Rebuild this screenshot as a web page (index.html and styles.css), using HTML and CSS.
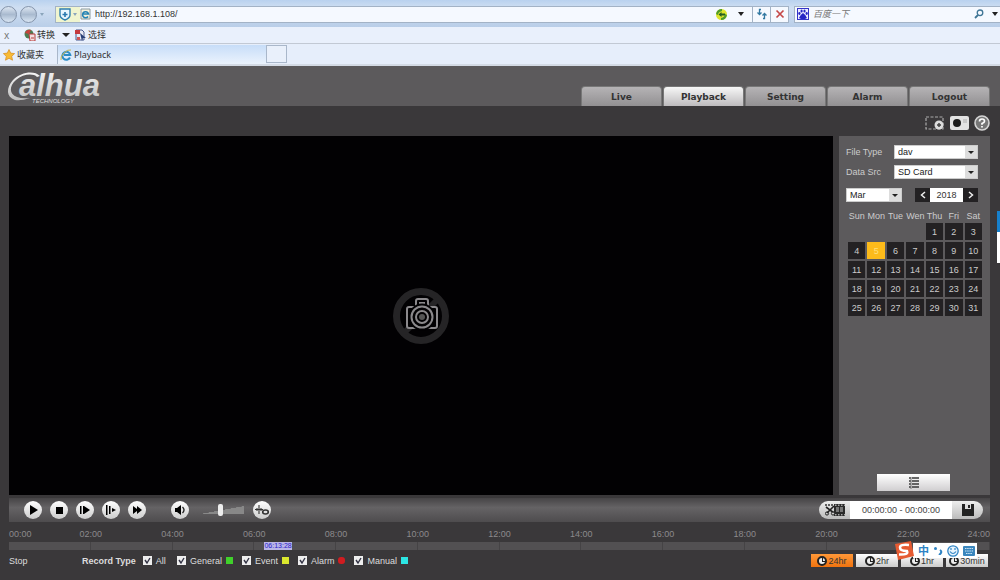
FILE: index.html
```html
<!DOCTYPE html>
<html lang="en">
<head>
<meta charset="utf-8">
<title>Playback</title>
<link rel="stylesheet" href="styles.css">
</head>
<body>
<div class="browser">
  <div class="address-row">
    <div class="nav">
      <button class="orb" aria-label="Back"></button><button class="orb" aria-label="Forward"></button>
      <i class="caret faint"></i>
    </div>
    <div class="address">
      <span class="shield">
        <svg width="12" height="13" viewBox="0 0 12 13"><path d="M1 1h10v6q0 3-5 5Q1 10 1 7z" fill="#e8f6ff" stroke="#2f7fb0" stroke-width="1.4"/><path d="M6 4v5M3.500 6.500h5" stroke="#2878b0" stroke-width="1.600"/></svg>
        <i class="caret faint"></i>
      </span>
      <svg class="page" width="11" height="12" viewBox="0 0 11 12"><path d="M1 1h9v10H1z" fill="#f4f1dc" stroke="#8a9aa0"/><path d="M8 8.500A3 3 0 1 1 8.500 6H3.500" fill="none" stroke="#2382b4" stroke-width="1.600"/></svg>
      <input class="url" type="text" aria-label="Address" value="http://192.168.1.108/">
      <svg width="13" height="13" viewBox="0 0 13 13"><circle cx="6.500" cy="6.500" r="5.500" fill="#dde52c"/><path d="M7 1Q2 1 1 6l2 1q0-3 4-4zM6 12q5 0 6-5l-2-1q0 3-4 4z" fill="#4e9b2e"/><path d="M3.500 6.500L6.500 4v5zM6 5.500h4v2H6z" fill="#245e20"/></svg>
      <i class="caret"></i>
      <button class="cell" aria-label="Refresh"><svg width="12" height="12" viewBox="0 0 12 12"><path d="M5 1.500H3.500V6M1.500 4.500l2 2 2-2M7 10.500h1.500V6M6.500 7.500l2-2 2 2" fill="none" stroke="#3379a2" stroke-width="1.300"/></svg></button>
      <button class="cell" aria-label="Stop"><svg width="10" height="10" viewBox="0 0 10 10"><path d="M1.500 1.500l7 7M8.500 1.500l-7 7" stroke="#c54848" stroke-width="1.700"/></svg></button>
    </div>
    <div class="search">
      <svg width="12" height="12" viewBox="0 0 12 12"><path d="M0 0h12v12H0z" fill="#3333c8"/><path d="M1 1h10v10H1z" fill="#eef"/><g fill="#2626c4"><ellipse cx="4.600" cy="3" rx="1.100" ry="1.600"/><ellipse cx="7.500" cy="3" rx="1.100" ry="1.600"/><ellipse cx="2.400" cy="5.500" rx="1.100" ry="1.400"/><ellipse cx="9.700" cy="5.500" rx="1.100" ry="1.400"/><path d="M6 5q3 2 4 5l-2 1H4l-2-1q1-3 4-5z"/></g></svg>
      <input class="query" type="text" aria-label="Search" placeholder="百度一下">
      <svg width="10" height="10" viewBox="0 0 10 10"><circle cx="6" cy="3.800" r="2.800" fill="none" stroke="#3f7696" stroke-width="1.300"/><path d="M4 6L1 9" stroke="#3f7696" stroke-width="1.800"/></svg>
      <i class="caret"></i>
    </div>
  </div>
  <div class="addon-row">
    <span class="close">x</span>
    <svg width="12" height="12" viewBox="0 0 12 12"><circle cx="5" cy="5" r="4.500" fill="#4b7c52"/><path d="M1 4q2-4 6-3L5 5z" fill="#c8423b"/><path d="M5 5h6v7H6z" fill="#f3dede" stroke="#b63c3c"/><path d="M7 9h3" stroke="#b63c3c"/></svg>
    <span class="addon">转换</span>
    <i class="caret big"></i>
    <svg width="12" height="12" viewBox="0 0 12 12"><path d="M1 1h6l2 2v8H1z" fill="#e7e9f4" stroke="#47598e"/><path d="M0 1h5v4H0z" fill="#c4383d"/><path d="M5 4l6 5-3 0-1 3z" fill="#273f78"/><path d="M2 8h3v3H2z" fill="#cf5555"/></svg>
    <span class="addon">选择</span>
  </div>
  <div class="tab-row">
    <div class="favorites">
      <svg width="12" height="12" viewBox="0 0 12 12"><path d="M6 .5l1.700 3.600 3.900.5-2.900 2.700.8 3.900L6 9.300l-3.500 1.900.8-3.900L.4 4.600l3.900-.5z" fill="#f8bb35" stroke="#d9932a" stroke-width=".8"/></svg>
      <span>收藏夹</span>
    </div>
    <div class="page-tab">
      <svg width="12" height="12" viewBox="0 0 12 12"><path d="M10 8.500A4 4 0 1 1 10.300 6H4" fill="none" stroke="#2d8dc6" stroke-width="2"/><path d="M1 11Q0 8 4 4t7-3" fill="none" stroke="#c9b54a" stroke-width="1"/></svg>
      <span>Playback</span>
    </div>
    <button class="new-tab" aria-label="New tab"></button>
  </div>
</div>

<div class="app">
  <header class="header">
    <svg class="logo" width="100" height="36" viewBox="0 0 100 36" role="img" aria-label="alhua technology">
      <defs><linearGradient id="metal" x1="0" y1="0" x2="0" y2="1"><stop offset="0" stop-color="#f5f5f5"/><stop offset="1" stop-color="#bdbdbd"/></linearGradient></defs>
      <path d="M34 8C28 2 15 4 7 12 0 20 0 29 9 32q6 1 15-2-8 1-13-1C3 26 3 18 10 12 17 6 27 5 31 9z" fill="url(#metal)"/>
      <text x="13" y="28" class="logo-name">alhua</text>
      <text x="26" y="35" class="logo-sub">TECHNOLOGY</text>
    </svg>
    <nav class="tabs">
      <a href="#live">Live</a><a href="#playback" class="active">Playback</a><a href="#setting">Setting</a><a href="#alarm">Alarm</a><a href="#logout">Logout</a>
    </nav>
  </header>

  <main class="content">
    <div class="tools">
      <button aria-label="Select region"><svg width="20" height="16" viewBox="0 0 20 16"><path d="M1 2h17v12H1z" fill="none" stroke="#aaa" stroke-width="1.200" stroke-dasharray="3 1.500"/><circle cx="14" cy="10" r="4.500" fill="#ddd"/><path d="M14 8v4M12 10h4" stroke="#444" stroke-width="1.500"/></svg></button>
      <button aria-label="Record mode"><svg width="19" height="14" viewBox="0 0 19 14"><rect width="19" height="14" rx="2" fill="#e3e3e3"/><circle cx="7" cy="7" r="4" fill="#1c1c1c"/><path d="M13 3h4v4h-4z" fill="#c8c8c8"/></svg></button>
      <button aria-label="Help"><svg width="16" height="16" viewBox="0 0 16 16"><circle cx="8" cy="8" r="7" fill="#777" stroke="#d5d5d5" stroke-width="1.600"/><path d="M5.500 6.500Q5.500 4 8 4t2.500 2.200Q10.500 7.500 8 8.500v1.200M8 11v1.600" fill="none" stroke="#fff" stroke-width="1.700"/></svg></button>
    </div>

    <div class="stage">
      <div class="video">
        <svg class="camera" width="58" height="58" viewBox="0 0 58 58"><circle cx="29" cy="29" r="24.500" fill="none" stroke="#252426" stroke-width="7"/><path d="M12 46L46 12" stroke="#252426" stroke-width="6"/><g fill="#020103" stroke="#8b898c" stroke-width="2"><path d="M24 20v-6q0-2 2-2h8q2 0 2 2v6z"/><path d="M27 16.500h6" stroke-width="3"/><rect x="15" y="20" width="30" height="21" rx="2"/><circle cx="30" cy="30" r="12.500" stroke="#020103"/><circle cx="30" cy="30" r="10.500"/><circle cx="30" cy="30" r="6"/><circle cx="30" cy="30" r="3" fill="#555" stroke="none"/></g></svg>
      </div>
      <aside class="panel">
        <div class="field"><label for="type">File Type</label><select id="type"><option>dav</option></select></div>
        <div class="field"><label for="src">Data Src</label><select id="src"><option>SD Card</option></select></div>
        <div class="period">
          <select aria-label="Month"><option>Mar</option></select>
          <div class="year">
            <button aria-label="Previous year"><svg width="6" height="8" viewBox="0 0 6 8"><path d="M5 1L1.500 4 5 7" fill="none" stroke="#eee" stroke-width="1.500"/></svg></button>
            <input type="text" aria-label="Year" value="2018">
            <button aria-label="Next year"><svg width="6" height="8" viewBox="0 0 6 8"><path d="M1 1l3.500 3L1 7" fill="none" stroke="#eee" stroke-width="1.500"/></svg></button>
          </div>
        </div>
        <table class="calendar">
          <thead><tr><th>Sun</th><th>Mon</th><th>Tue</th><th>Wen</th><th>Thu</th><th>Fri</th><th>Sat</th></tr></thead>
          <tbody>
            <tr><td class="blank"></td><td class="blank"></td><td class="blank"></td><td class="blank"></td><td>1</td><td>2</td><td>3</td></tr>
            <tr><td>4</td><td class="today">5</td><td>6</td><td>7</td><td>8</td><td>9</td><td>10</td></tr>
            <tr><td>11</td><td>12</td><td>13</td><td>14</td><td>15</td><td>16</td><td>17</td></tr>
            <tr><td>18</td><td>19</td><td>20</td><td>21</td><td>22</td><td>23</td><td>24</td></tr>
            <tr><td>25</td><td>26</td><td>27</td><td>28</td><td>29</td><td>30</td><td>31</td></tr>
          </tbody>
        </table>
        <button class="list" aria-label="File list"><svg width="12" height="12" viewBox="0 0 12 12"><path d="M1 1h2M1 4h2M1 7h2M1 10h2M4 1h7M4 4h7M4 7h7M4 10h7" stroke="#3a3a3a" stroke-width="1.400"/><path d="M3 0v12" stroke="#777" stroke-width="1"/></svg></button>
      </aside>
    </div>

    <div class="controls">
      <div class="transport">
        <button class="round" aria-label="Play"><svg width="10" height="10" viewBox="0 0 10 10"><path d="M2 0l8 5-8 5z"/></svg></button>
        <button class="round" aria-label="Stop"><svg width="10" height="10" viewBox="0 0 10 10"><path d="M2 2h7v7H2z"/></svg></button>
        <button class="round" aria-label="Next frame"><svg width="10" height="10" viewBox="0 0 10 10"><path d="M0 1h1.500v8H0zM3 1h1v8H3zM4 1l6 4-6 4z"/></svg></button>
        <button class="round" aria-label="Slow"><svg width="10" height="10" viewBox="0 0 10 10"><path d="M0 0h1.500v10H0zM3 1h1.500v8H3zM6 3l4 2-4 2z"/></svg></button>
        <button class="round" aria-label="Fast"><svg width="10" height="10" viewBox="0 0 10 10"><path d="M1 1l4 3V1l5 4-5 4V6L1 9z"/></svg></button>
      </div>
      <button class="round" aria-label="Mute"><svg width="11" height="10" viewBox="0 0 11 10"><path d="M0 3h2l4-3v10L2 7H0z"/><path d="M7.500 2q3 3 0 6" fill="none" stroke="#222" stroke-width="1.300"/></svg></button>
      <div class="volume"><input type="range" aria-label="Volume" min="0" max="100" value="47"></div>
      <button class="round" aria-label="Rules"><svg width="15" height="12" viewBox="0 0 15 12"><path d="M4 1v9M0 5.500h8M2 4v3M6 4v3" stroke="#333" stroke-width="1.100"/><ellipse cx="10.500" cy="8" rx="2.800" ry="2" fill="none" stroke="#333" stroke-width="1.600"/></svg></button>
      <div class="clip">
        <button aria-label="Cut"><svg width="20" height="12" viewBox="0 0 20 12"><path d="M9 0h11v12H9z" fill="#2a2a2a"/><path d="M11 3h3v5h-3zM15 3h3v5h-3z" fill="#777"/><path d="M10 1.200h10M10 10.800h10" stroke="#ddd" stroke-width="1" stroke-dasharray="1.500 1.500"/><path d="M0 1h10" stroke="#333" stroke-width="1.500" stroke-dasharray="2 1"/><path d="M1 3l8 6M9 2L2 9" stroke="#222" stroke-width="1.600"/><circle cx="2" cy="9.500" r="1.600" fill="none" stroke="#222"/><circle cx="8" cy="9.500" r="1.600" fill="#ccc" stroke="#222"/></svg></button>
        <span class="range">00:00:00 - 00:00:00</span>
        <button aria-label="Save"><svg width="12" height="12" viewBox="0 0 12 12"><path d="M0 0h12v12H0z" fill="#222"/><path d="M3 0h6v5H3z" fill="#ddd"/><path d="M6 1h2v3H6z" fill="#222"/></svg></button>
      </div>
    </div>

    <div class="timeline">
      <div class="hours"><span>00:00</span><span>02:00</span><span>04:00</span><span>06:00</span><span>08:00</span><span>10:00</span><span>12:00</span><span>14:00</span><span>16:00</span><span>18:00</span><span>20:00</span><span>22:00</span><span>24:00</span></div>
      <div class="track"><i></i><i></i><i></i><i></i><i></i><i></i><i></i><i></i><i></i><i></i><i></i><i></i><span class="cursor">06:13:28</span></div>
    </div>

    <footer class="status">
      <span class="state">Stop</span>
      <span class="types">
        <b>Record Type</b>
        <label class="all"><input type="checkbox" checked>All</label>
        <label><input type="checkbox" checked>General<i class="green"></i></label>
        <label><input type="checkbox" checked>Event<i class="yellow"></i></label>
        <label><input type="checkbox" checked>Alarm<i class="red"></i></label>
        <label><input type="checkbox" checked>Manual<i class="cyan"></i></label>
      </span>
      <span class="zoom">
        <button class="on"><i class="clock"></i>24hr</button><button><i class="clock"></i>2hr</button><button><i class="clock"></i>1hr</button><button><i class="clock"></i>30min</button>
      </span>
    </footer>
  </main>
</div>

<div class="side-widget"></div>
<div class="ime">
  <svg width="20" height="19" viewBox="0 0 20 19"><path d="M1 3l16-3 3 15-16 4z" fill="#e65b32"/><path d="M15 4Q6 3 6 6.500t7 3.500q2 4-8 3.500" fill="none" stroke="#fff" stroke-width="2.500"/></svg>
  <span>中</span>
  <svg width="10" height="9" viewBox="0 0 10 9"><circle cx="2.500" cy="2.500" r="1.500" fill="#2e83c4"/><path d="M7 4q3 2-1 5" fill="none" stroke="#2e83c4" stroke-width="2"/></svg>
  <svg width="12" height="12" viewBox="0 0 12 12"><circle cx="6" cy="6" r="5.200" fill="#e8f4fc" stroke="#3285c5" stroke-width="1.300"/><path d="M3 6.500q3 4 6 0M4 3v2M8 3v2" fill="none" stroke="#3285c5" stroke-width="1.200"/></svg>
  <svg width="12" height="10" viewBox="0 0 12 10"><rect width="12" height="10" rx="1" fill="#3a86bd"/><path d="M2 2.500h8M2 5h8M3 7.500h6" stroke="#cce5f5" stroke-width="1" stroke-dasharray="1.500 .7"/></svg>
</div>
</body>
</html>
```
FILE: styles.css
```css
* { box-sizing: border-box; }
body {
  margin: 0;
  min-height: 100vh;
  display: flex;
  flex-direction: column;
  background: #3a383a;
  font: 9px/12px "Liberation Sans", Arial, sans-serif;
  color: #ccc;
}
button, input, select { font: inherit; color: inherit; margin: 0; padding: 0; border: 0; border-radius: 0; background: none; }
svg { display: block; flex: none; }
a { text-decoration: none; }

/* Browser chrome */
.browser { background: #e6eefb; color: #333; font-family: "Noto Sans", "Noto Sans CJK SC", sans-serif; }
.address-row { display: flex; align-items: center; gap: 5px; height: 27px; padding-top: 1px; background: linear-gradient(#b9d2ef, #d0dff2 30%, #b9cee8); }
.nav { display: flex; align-items: center; gap: 3px; width: 50px; }
.orb { width: 17px; height: 17px; border: 1px solid #8494ab; border-radius: 50%; background: linear-gradient(#dce6f2, #a9bacf 50%, #d9e6f4); }
.caret { flex: none; border: 3px solid transparent; border-top: 4px solid #222; border-bottom: 0; }
.caret.faint { border-width: 3px 2px 0; border-top-color: #8ba5bb; }
.caret.big { border-width: 4px 4px 0; }
.address, .search { display: flex; align-items: center; height: 17px; border: 1px solid #a3b3c6; background: #f5f9ff; }
.address { flex: 1; gap: 4px; }
.shield { display: flex; align-items: center; gap: 2px; height: 15px; padding: 0 3px; background: #f0f5cf; }
.page { margin-left: -4px; }
.url { flex: 1; min-width: 0; font-family: "Liberation Sans", Arial, sans-serif; }
.address > .caret { margin: 0 4px 0 6px; }
.cell { display: grid; place-items: center; align-self: stretch; width: 18px; margin-left: -4px; border-left: 1px solid #a3b3c6; }
.address .cell:first-of-type { margin-left: 0; }
.search { width: 206px; gap: 4px; padding: 0 2px; border-right: 0; }
.query { flex: 1; min-width: 0; font-style: italic; }
.query::placeholder { color: #777; opacity: 1; }
.search .caret { margin-left: 4px; }
.addon-row { display: flex; align-items: center; height: 17px; padding-left: 4px; border-bottom: 1px solid #c2c9d4; background: #e9f0fc; }
.close { width: 20px; color: #777; font-size: 10px; }
.addon { margin-left: 1px; }
.addon-row .big { margin: 0 5px 0 7px; }
.tab-row { display: flex; height: 22px; padding-top: 1px; border-bottom: 2px solid #d4dbe5; }
.favorites { display: flex; align-items: center; gap: 2px; width: 58px; padding-left: 3px; border-right: 1px solid #a9b7ca; }
.page-tab { display: flex; align-items: center; gap: 2px; width: 208px; padding-left: 2px; background: linear-gradient(#c7ddf8, #ebf3fd); }
.new-tab { width: 21px; height: 18px; border: 1px solid #a9b7ca; background: #e9f0fb; }

/* Header */
.app { flex: 1; display: flex; flex-direction: column; }
.header { display: flex; justify-content: space-between; align-items: flex-end; height: 40px; padding: 0 10px 0 6px; background: #5c5a5c; }
.logo { align-self: center; }
.logo-name { font: italic bold 31px "Liberation Sans", Arial, sans-serif; fill: url(#metal); }
.logo-sub { font: italic 6px "Liberation Sans", Arial, sans-serif; fill: #ddd; }
.tabs { display: flex; gap: 1px; }
.tabs a { display: grid; place-items: center; width: 81px; height: 20px; border: 1px solid #777; border-bottom: 0; border-radius: 4px 4px 0 0; background: linear-gradient(#b5b3b5, #929092); color: #333; font: bold 9px/12px "DejaVu Sans", sans-serif; }
.tabs .active { background: linear-gradient(#f7f7f7, #bdbbbd); }

/* Content */
.content { flex: 1; display: flex; flex-direction: column; padding: 0 10px 0 9px; }
.tools { display: flex; justify-content: flex-end; align-items: center; gap: 5px; height: 30px; padding-top: 4px; }
.stage { flex: 1; display: flex; gap: 6px; }
.video { flex: 1; display: grid; place-items: center; background: #020103; }
.panel { display: flex; flex-direction: column; width: 151px; padding: 9px 9px 4px 7px; background: #5c5a5c; }
.field { display: flex; align-items: center; justify-content: space-between; height: 14px; margin-bottom: 6px; padding-right: 3px; }
select { appearance: none; width: 84px; height: 14px; padding-left: 3px; border: 1px solid #ccc; color: #222; background: url("data:image/svg+xml,%3Csvg xmlns='http://www.w3.org/2000/svg' width='12' height='12'%3E%3Cpath d='M0 0h12v12H0z' fill='%23ddd'/%3E%3Cpath d='M3 5h6L6 8z' fill='%23222'/%3E%3C/svg%3E") right center no-repeat #fff; }
.period { display: flex; justify-content: space-between; margin: 3px 3px 7px 0; }
.period select { width: 56px; }
.year { display: flex; }
.year button { display: grid; place-items: center; width: 15px; height: 14px; background: #232123; }
.year input { width: 33px; height: 14px; background: #fff; color: #333; text-align: center; }
.calendar { align-self: flex-start; table-layout: fixed; width: 138px; border-spacing: 2px; }
.calendar th { height: 10px; padding: 0; font-weight: normal; white-space: nowrap; line-height: 10px; }
.calendar td { height: 17px; padding: 0; background: #232123; text-align: center; }
.calendar .blank { background: none; }
.calendar .today { background: #fdbb1a; color: #ffe07c; }
.list { display: grid; place-items: center; width: 73px; height: 17px; margin: auto auto 0; background: linear-gradient(#fff, #d0ced0); }

/* Playback bar */
.controls { display: flex; align-items: center; height: 24px; margin-top: 3px; padding: 0 7px 0 15px; background: linear-gradient(#464446, #656365 40%, #4e4c4e); }
.transport { display: flex; gap: 8px; margin-right: 25px; }
.round { display: grid; place-items: center; width: 18px; height: 18px; border-radius: 50%; background: linear-gradient(#fff, #ccc); }
.volume { width: 44px; height: 12px; margin: 0 9px 0 11px; background: linear-gradient(to bottom right, transparent 50%, #888 51%) center / 100% 8px no-repeat; }
.volume input { display: block; appearance: none; width: 100%; height: 12px; }
.volume input::-webkit-slider-thumb { appearance: none; width: 5px; height: 12px; border-radius: 2px; background: #eee; }
.clip { display: flex; align-items: center; height: 18px; margin-left: auto; border-radius: 9px; overflow: hidden; background: linear-gradient(#eee, #bbb); }
.clip button { display: grid; place-items: center; width: 31px; height: 18px; }
.range { width: 102px; background: #fff; color: #444; line-height: 18px; text-align: center; }

/* Timeline */
.timeline { padding-top: 6px; }
.hours { display: flex; color: #8c8a8c; }
.hours span { flex: 2; text-align: center; }
.hours span:first-child { flex: 1; text-align: left; }
.hours span:last-child { flex: 1; text-align: right; }
.track { position: relative; display: flex; height: 8px; margin-top: 2px; background: #525052; }
.track i { flex: 1; border-right: 1px solid #454345; }
.cursor { position: absolute; left: 26%; top: 0; width: 28px; height: 8px; overflow: hidden; background: #b9b5e8; color: #2a20c8; font-size: 7px; line-height: 8px; text-align: center; }

/* Status */
.status { display: flex; align-items: center; height: 30px; padding-bottom: 9px; color: #ddd; }
.state { width: 73px; }
.types { display: flex; align-items: center; }
.types b { margin-right: 7px; }
.types label { display: flex; align-items: center; margin-right: 9px; }
.types .all { margin-right: 11px; }
.types input { appearance: none; width: 9px; height: 9px; margin-right: 4px; background: url("data:image/svg+xml,%3Csvg xmlns='http://www.w3.org/2000/svg' width='9' height='9'%3E%3Cpath d='M2 4l2 3 3-5' fill='none' stroke='%23334' stroke-width='1.4'/%3E%3C/svg%3E") #eee; }
.types i { width: 7px; height: 7px; margin-left: 4px; }
.types .green { background: #40d12b; }
.types .yellow { background: #dbe82e; }
.types .red { background: #d01c20; border-radius: 3px; }
.types .cyan { background: #2ce6e4; }
.zoom { display: flex; gap: 3px; margin: 0 2px 0 auto; }
.zoom button { display: flex; align-items: center; justify-content: center; gap: 1px; width: 42px; height: 13px; background: linear-gradient(#fff, #ccc); color: #333; }
.zoom .on { background: linear-gradient(#ff9838, #f0730f); }
.clock { width: 10px; height: 10px; border: 2px solid #222; border-radius: 50%; background: linear-gradient(#222, #222) 3px 0 / 1px 4px no-repeat, linear-gradient(#222, #222) 3px 3px / 3px 1px no-repeat #eee; }

/* Desktop overlays */
.side-widget { position: absolute; right: 0; top: 211px; width: 3px; height: 52px; background: linear-gradient(#1680cc 40%, #fff 40%); }
.ime { position: absolute; right: 23px; bottom: 20px; display: flex; align-items: center; gap: 4px; height: 19px; padding-right: 2px; background: linear-gradient(transparent 2px, #fff 2px, #fff 17px, transparent 17px) right / 64px 100% no-repeat; color: #2e83c4; font: bold 11px/15px "Noto Sans CJK SC", sans-serif; }
```
